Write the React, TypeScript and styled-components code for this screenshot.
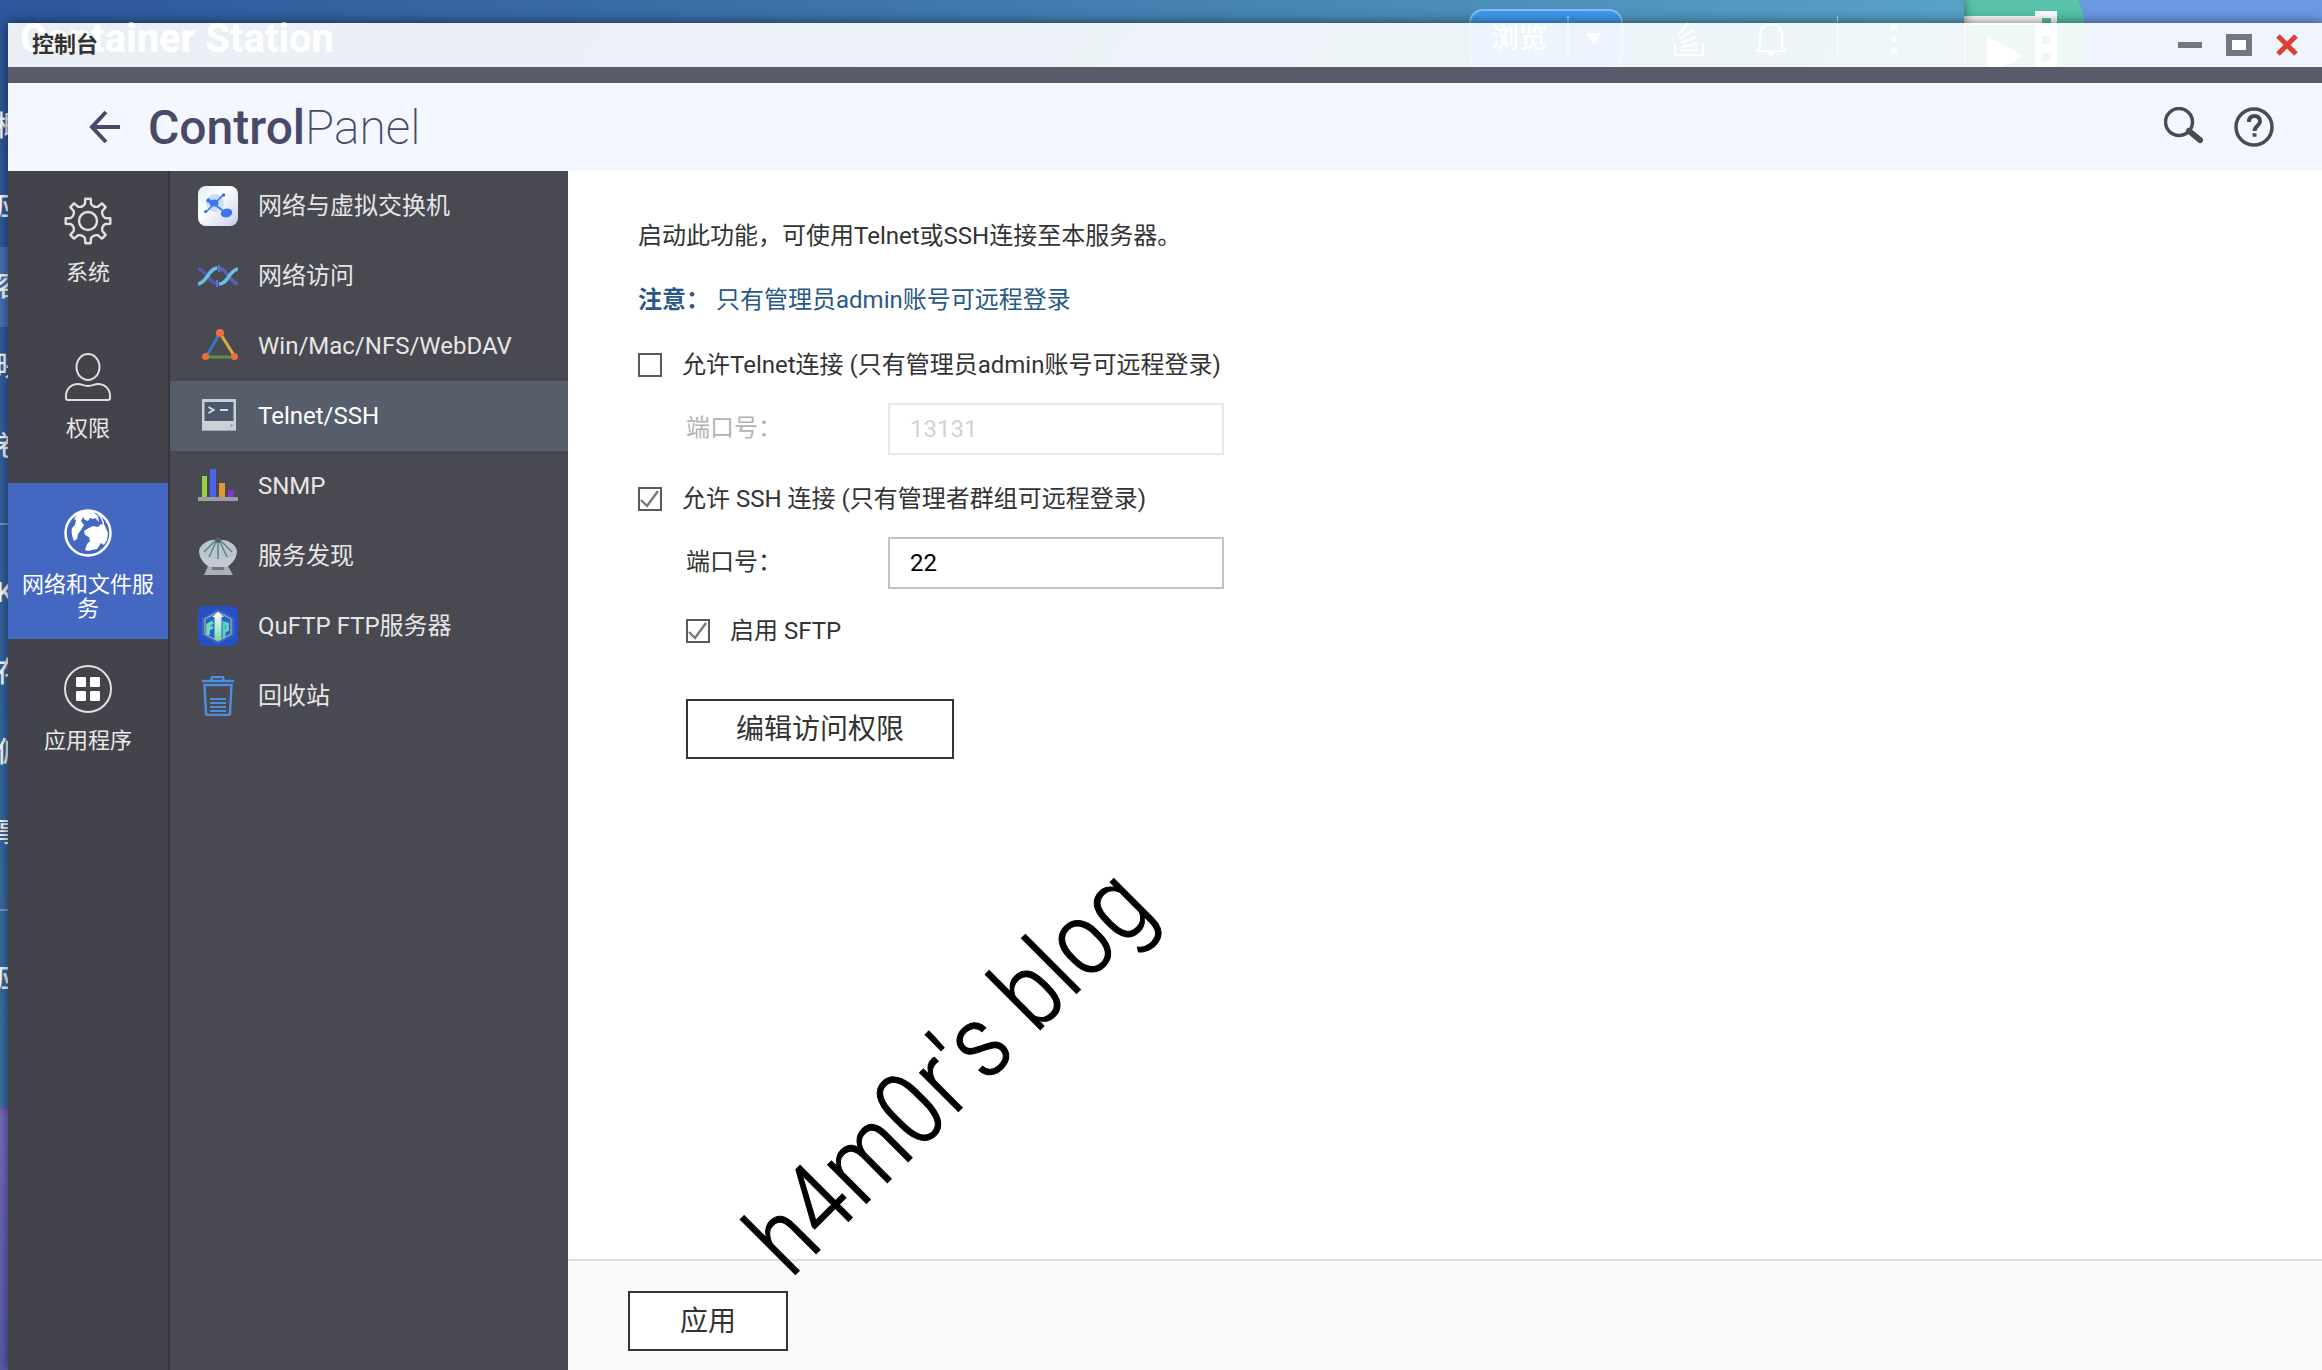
import React, { useState } from "react";
import styled, { createGlobalStyle } from "styled-components";

const GlobalStyle = createGlobalStyle`
  *, *::before, *::after { box-sizing: border-box; }
  body {
    margin: 0;
    font-family: Roboto, "Noto Sans CJK SC", sans-serif;
    font-size: 24px;
    color: #333;
  }
  button, input { font: inherit; color: inherit; }
`;

/* ---------- desktop and the window behind ---------- */

const Desktop = styled.div`
  position: relative;
  display: flex;
  flex-direction: column;
  min-height: 100vh;
  overflow: hidden;
  background:
    linear-gradient(180deg, transparent 1106px, #7a6fc4 1106px, #5a5fae 1370px) 0 0 / 600px 100% no-repeat,
    #6b99e4;
`;

const DesktopIcon = styled.svg`
  position: absolute;
  left: 1900px;
  top: 0;
`;

const BackWindow = styled.div`
  position: absolute;
  left: 0;
  top: 0;
  width: 1964px;
  height: 1106px;
  overflow: hidden;
  color: #fff;
  background: linear-gradient(125deg, #2d579c 0%, #3b71a8 28%, #4f93bd 58%, #5aa5c9 75%);
  box-shadow: 0 0 10px rgba(0, 0, 0, 0.5);
`;

const BackHeader = styled.div`
  display: flex;
  align-items: center;
  justify-content: space-between;
  height: 78px;
  padding: 0 64px 0 20px;
`;

const BackTitle = styled.span`
  font-size: 40px;
  font-weight: 700;
  line-height: 48px;
`;

const BackTools = styled.div`
  display: flex;
  align-items: center;
  gap: 50px;
`;

const BrowseButton = styled.button`
  display: flex;
  align-items: center;
  width: 154px;
  height: 60px;
  padding: 0;
  color: #fff;
  font-size: 28px;
  font-weight: 500;
  line-height: 32px;
  background: #409aee;
  border: 2px solid #7cc0fb;
  border-radius: 14px;
  span { flex: 1; text-align: center; }
  svg { width: 54px; height: 46px; border-left: 2px solid #7cc0fb; }
`;

const ToolDivider = styled.span`
  width: 1px;
  height: 46px;
  background: #b8dbea;
`;

const BackNav = styled.div`
  display: flex;
  flex-direction: column;
  padding-top: 9px;
`;

const BackItem = styled.div<{ $active?: boolean }>`
  display: flex;
  align-items: center;
  height: 80px;
  font-size: 28px;
  font-weight: 500;
  line-height: 32px;
  background: ${(p) => (p.$active ? "rgba(110, 150, 220, 0.4)" : "transparent")};
  span { margin-left: -4px; }
`;

const BackRule = styled.div`
  height: 2px;
  margin: 36px 0 28px;
  background: rgba(255, 255, 255, 0.35);
`;

/* ---------- control panel window ---------- */

const Window = styled.div`
  position: relative;
  display: flex;
  flex-direction: column;
  flex: 1;
  margin: 23px 0 0 8px;
  box-shadow: 0 0 12px rgba(0, 0, 0, 0.6);
`;

const TitleBar = styled.div`
  display: flex;
  align-items: center;
  justify-content: space-between;
  height: 44px;
  padding: 0 24px;
  background: rgba(255, 255, 255, 0.9);
`;

const WindowTitle = styled.span`
  font-size: 22px;
  font-weight: 700;
  line-height: 24px;
`;

const WindowButtons = styled.div`
  display: flex;
  align-items: center;
  gap: 24px;
`;

const IconButton = styled.button`
  display: flex;
  padding: 0;
  background: none;
  border: 0;
  cursor: pointer;
`;

const Band = styled.div`
  height: 16px;
  background: #5b5b6e;
`;

const Header = styled.header`
  display: flex;
  align-items: center;
  justify-content: space-between;
  height: 88px;
  padding: 0 48px 0 80px;
  background: #f4f7ff;
`;

const Brand = styled.div`
  display: flex;
  align-items: center;
  gap: 28px;
`;

const BrandName = styled.h1`
  margin: 0;
  padding-top: 2px;
  font-size: 48px;
  font-weight: 200;
  line-height: 56px;
  color: #484a68;
  b { font-weight: 500; }
`;

const HeaderTools = styled.div`
  display: flex;
  align-items: center;
  gap: 30px;
`;

const Body = styled.div`
  display: grid;
  grid-template-columns: 160px 400px 1fr;
  flex: 1;
  background: #fff;
`;

const Categories = styled.nav`
  background: #43434b;
`;

const Category = styled.button<{ $active?: boolean }>`
  display: flex;
  flex-direction: column;
  align-items: center;
  gap: 16px;
  width: 100%;
  height: 156px;
  padding: 26px 12px 0;
  font-size: 22px;
  line-height: 24px;
  color: ${(p) => (p.$active ? "#fff" : "#e8e8e8")};
  background: ${(p) => (p.$active ? "#4468c2" : "transparent")};
  border: 0;
  cursor: pointer;
`;

const Pages = styled.nav`
  line-height: 32px;
  background: #494951;
  border-left: 2px solid #37373b;
`;

const Page = styled.a<{ $active?: boolean }>`
  display: flex;
  align-items: center;
  gap: 20px;
  height: 70px;
  padding-left: 28px;
  color: ${(p) => (p.$active ? "#fff" : "#e6e6e6")};
  text-decoration: none;
  background: ${(p) => (p.$active ? "#575e6b" : "transparent")};
`;

const Main = styled.main`
  position: relative;
  display: flex;
  flex-direction: column;
`;

const Content = styled.div`
  display: flex;
  flex-direction: column;
  align-items: flex-start;
  flex: 1;
  padding: 49px 70px;
  line-height: 32px;
`;

const Intro = styled.p`
  margin: 0 0 32px;
`;

const Note = styled.p`
  display: flex;
  gap: 6px;
  margin: 0;
  color: #2a5885;
`;

const Group = styled.div`
  display: flex;
  flex-direction: column;
  gap: 22px;
  margin-top: 33px;
  & + & { margin-top: 28px; }
`;

const CheckRow = styled.label`
  display: flex;
  align-items: center;
  gap: 20px;
`;

const checkMark =
  "url(\"data:image/svg+xml,%3Csvg xmlns='http://www.w3.org/2000/svg' viewBox='0 0 20 20'%3E%3Cpath d='M1 11l6 6L18 2' fill='none' stroke='%23777' stroke-width='2.4'/%3E%3C/svg%3E\")";

const CheckBox = styled.input`
  appearance: none;
  width: 24px;
  height: 24px;
  margin: 0;
  border: 2px solid #5a5a5a;
  background: #fff;
  &:checked { background-image: ${checkMark}; }
`;

const PortRow = styled.div<{ $disabled?: boolean }>`
  display: flex;
  align-items: center;
  padding-left: 48px;
  color: ${(p) => (p.$disabled ? "#b3b3b3" : "#333")};
  label { width: 202px; padding-bottom: 2px; }
`;

const PortInput = styled.input`
  width: 336px;
  height: 52px;
  padding: 0 20px;
  color: #000;
  background: #fff;
  border: 2px solid #c2c2c2;
  &:disabled { color: #d2d2d2; border-color: #e8e8e8; }
`;

const Indented = styled.div`
  display: flex;
  flex-direction: column;
  align-items: flex-start;
  gap: 52px;
  margin-top: 26px;
  padding-left: 48px;
`;

const OutlineButton = styled.button<{ $width: number }>`
  width: ${(p) => p.$width}px;
  height: 60px;
  padding: 2px 0 0;
  font-size: 28px;
  line-height: 32px;
  background: #fff;
  border: 2px solid #333;
  cursor: pointer;
`;

const Footer = styled.footer`
  padding: 30px 60px 19px;
  background: #fafafa;
  border-top: 2px solid #dcdcdc;
`;

const Watermark = styled.div`
  position: absolute;
  left: 222px;
  top: 1024px;
  font-family: "Roboto Condensed", Roboto, sans-serif;
  font-size: 104px;
  font-weight: 300;
  line-height: 100px;
  color: #000;
  -webkit-text-stroke: 1px #000;
  white-space: nowrap;
  transform: rotate(-45deg);
  transform-origin: 0 85px;
  pointer-events: none;
`;

/* ---------- drawings ---------- */

const gearPath = (() => {
  const pts: string[] = [];
  for (let i = 0; i < 8; i++) {
    const at = (deg: number, r: number) => {
      const a = ((i * 45 + deg - 90) * Math.PI) / 180;
      return `${(24 + r * Math.cos(a)).toFixed(1)} ${(24 + r * Math.sin(a)).toFixed(1)}`;
    };
    pts.push(`${i ? "L" : "M"}${at(-7, 22.5)}L${at(7, 22.5)}L${at(10, 17.5)}Q${at(22.5, 14.5)} ${at(35, 17.5)}`);
  }
  return pts.join("") + "Z";
})();

const GearIcon = () => (
  <svg width="48" height="48" viewBox="0 0 48 48" fill="none" stroke="#e0e0e0" strokeWidth="2.4" strokeLinejoin="round">
    <path d={gearPath} />
    <circle cx="24" cy="24" r="9" />
  </svg>
);

const UserIcon = () => (
  <svg width="48" height="48" viewBox="0 0 48 48" fill="none" stroke="#e0e0e0" strokeWidth="2">
    <ellipse cx="24" cy="14" rx="11.5" ry="13" />
    <path d="M14 31c4 0 5 2 10 2s6-2 10-2c7 0 12 5 12 12v2q0 2-2 2H4q-2 0-2-2v-2c0-7 5-12 12-12z" />
  </svg>
);

const GlobeIcon = () => (
  <svg width="48" height="48" viewBox="0 0 48 48">
    <circle cx="24" cy="24" r="22.5" fill="none" stroke="#fff" strokeWidth="2.5" />
    <path fill="#fff" d="M13 5l8-3 8 1 5 4 1 6-4-4-2 1-3-1-2 3-3-1-2-3-2 4 3 4-3 5-3 4-1 5-3 2c-2-4-3-9-2-13l3-3 1-5-2-1z" />
    <path fill="#fff" d="M23 20l6-3 5 1 3-3 4 2 3 7-1 7-3 5-3-2-4 6-5 1-4 1-3-1 2-6 3-3-1-4-4-2-1-4z" />
    <path d="M32 3q7 5 8 15" fill="none" stroke="#fff" strokeWidth="1.5" />
  </svg>
);

const AppsIcon = () => (
  <svg width="48" height="48" viewBox="0 0 48 48">
    <circle cx="24" cy="24" r="23" fill="none" stroke="#e0e0e0" strokeWidth="2" />
    <g fill="#fff">
      <rect x="12" y="12" width="10" height="10" rx="1" />
      <rect x="26" y="12" width="10" height="10" rx="1" />
      <rect x="12" y="26" width="10" height="10" rx="1" />
      <rect x="26" y="26" width="10" height="10" rx="1" />
    </g>
  </svg>
);

const SwitchIcon = () => (
  <svg width="40" height="40" viewBox="0 0 40 40">
    <defs>
      <linearGradient id="sw" x1="0" y1="0" x2="1" y2="1">
        <stop offset="0" stopColor="#dff0f2" />
        <stop offset="0.4" stopColor="#fff" />
        <stop offset="1" stopColor="#c8cfe6" />
      </linearGradient>
    </defs>
    <rect width="40" height="40" rx="8" fill="url(#sw)" />
    <circle cx="17" cy="17" r="9" fill="#c9defb" />
    <path d="M8 26L25 9M10 14l6 4 12 9" fill="none" stroke="#3a74f2" strokeWidth="1.6" />
    <g fill="#3a74f2">
      <ellipse cx="16" cy="17" rx="4.5" ry="3.5" />
      <ellipse cx="28.5" cy="27" rx="5.8" ry="4.4" transform="rotate(-15 28.5 27)" />
      <circle cx="25.5" cy="9" r="1.8" />
      <circle cx="10.5" cy="14.5" r="2.2" />
      <circle cx="7.6" cy="25.6" r="1.6" />
    </g>
  </svg>
);

const AccessIcon = () => (
  <svg width="40" height="40" viewBox="0 0 40 40" fill="none" strokeWidth="3.5">
    <path d="M0 13c9 1 11 15 20 15 6 0 8-2 11-7" stroke="#4f57b5" />
    <path d="M9 20c3-5 6-8 11-8 9 0 11 14 20 16" stroke="#5560bb" />
    <path d="M0 28c10-2 10-15 19-16" stroke="#6cc0dc" />
    <path d="M21 28c9 0 10-14 19-15" stroke="#6cc0dc" />
    <path d="M21 9v7M19 24v7" stroke="#4f78cf" strokeWidth="2" />
  </svg>
);

const TriangleIcon = () => (
  <svg width="40" height="40" viewBox="0 0 40 40" strokeWidth="3">
    <path d="M22 7L8 31" stroke="#3577c9" />
    <path d="M22 7l15 24" stroke="#e0a93a" />
    <path d="M8 31h29" stroke="#56943f" />
    <g fill="#ee6b43">
      <circle cx="22" cy="7" r="4" />
      <circle cx="7.5" cy="30.5" r="3.5" />
      <circle cx="36.5" cy="30.5" r="3.5" />
    </g>
  </svg>
);

const TerminalIcon = () => (
  <svg width="40" height="40" viewBox="0 0 40 40">
    <rect x="4" y="3" width="34" height="32" rx="1" fill="#c9d1d8" />
    <rect x="6.5" y="6" width="29" height="19" fill="#4d586c" />
    <path d="M10.5 11l5 3-5 3" fill="none" stroke="#d5dbe0" strokeWidth="2" />
    <path d="M22 14h8" stroke="#d5dbe0" strokeWidth="2" />
    <path d="M4 34.5h34" stroke="#9fa9b2" />
    <circle cx="33.5" cy="29.5" r="1.5" fill="#8fb0b8" />
  </svg>
);

const ChartIcon = () => (
  <svg width="40" height="40" viewBox="0 0 40 40">
    <rect x="4" y="10" width="5" height="21" fill="#93d244" />
    <rect x="12" y="3" width="6" height="28" fill="#4c63ee" />
    <rect x="21" y="17" width="6" height="14" fill="#dd9a35" />
    <rect x="30" y="24" width="6" height="7" fill="#7a38cf" />
    <rect y="31" width="40" height="4" fill="#9d9fa6" />
  </svg>
);

const ShellIcon = () => (
  <svg width="40" height="40" viewBox="0 0 40 40">
    <path d="M10 30h20l5 9H6z" fill="#a9afb6" />
    <path d="M20 4c9-1 18 4 19 11 0 8-7 16-13 16H14C8 31 1 23 1 15 2 8 11 3 20 4z" fill="#b9c6cd" />
    <path d="M2 19c3 7 7 12 12 12h12c5 0 9-5 12-12-10 6-26 6-36 0z" fill="#c6c9cf" />
    <path d="M20 5v18M18 6l-7 15M22 6l7 15M17 5L6 16M23 5l11 11" stroke="#65808a" strokeWidth="1.5" />
    <path d="M14 32.5h12" stroke="#6b7780" strokeWidth="3" />
    <circle cx="20" cy="4" r="3" fill="#4f6269" />
  </svg>
);

const FtpIcon = () => (
  <svg width="40" height="40" viewBox="0 0 40 40">
    <defs>
      <linearGradient id="ftp" x1="0" y1="0" x2="0" y2="1">
        <stop offset="0" stopColor="#fff" />
        <stop offset="1" stopColor="#6fdc9e" />
      </linearGradient>
    </defs>
    <rect width="40" height="40" rx="7" fill="#2850c4" />
    <path d="M20 3l16 9v17l-16 9-16-9V12z" fill="#3d66cf" />
    <path d="M20 6l13 7v15l-13 7-13-7V13z" fill="#1d63dc" stroke="#c5bd62" />
    <path d="M20 6l6 5h-2.5v22L20 35l-3.5-2V11H14z" fill="url(#ftp)" />
    <path d="M15 16l-5 3v10M10 23l5-2" fill="none" stroke="#6ee0b0" strokeWidth="3.5" />
    <path d="M26 32V17l3.5 1v6l-3 1" fill="none" stroke="#5fd0c0" strokeWidth="3" />
  </svg>
);

const TrashIcon = () => (
  <svg width="40" height="40" viewBox="0 0 40 40" fill="none" stroke="#4a90dc" strokeWidth="2.4">
    <path d="M4 5h32M13 5l1-4h11l1 4" />
    <path d="M6.5 9h27l-1.5 28q0 2-2 2H10q-2 0-2-2z" />
    <path d="M12 23h16M12 27h16M12 31h16M12 35h16" strokeWidth="2" />
  </svg>
);

const StackIcon = () => (
  <svg width="32" height="36" viewBox="0 0 32 36" fill="none" stroke="#fff" strokeWidth="2">
    <path d="M2 22v12h28V22M8 29h16M8 23l16 3M9 16l15 6M12 9l13 9M17 2l9 11" transform="matrix(-1 0 0 1 32 0)" />
  </svg>
);

const BellIcon = () => (
  <svg width="32" height="36" viewBox="0 0 32 36" fill="none" stroke="#fff" strokeWidth="2">
    <path d="M5 25V15C5 7 10 3 16 3s11 4 11 12v10l3 5H2z" />
    <path d="M12 31l4 3 4-3z" fill="#fff" />
  </svg>
);

/* ---------- data ---------- */

const categories = [
  { name: "系统", Icon: GearIcon },
  { name: "权限", Icon: UserIcon },
  { name: "网络和文件服务", Icon: GlobeIcon },
  { name: "应用程序", Icon: AppsIcon },
];

const pages = [
  { name: "网络与虚拟交换机", Icon: SwitchIcon },
  { name: "网络访问", Icon: AccessIcon },
  { name: "Win/Mac/NFS/WebDAV", Icon: TriangleIcon },
  { name: "Telnet/SSH", Icon: TerminalIcon },
  { name: "SNMP", Icon: ChartIcon },
  { name: "服务发现", Icon: ShellIcon },
  { name: "QuFTP FTP服务器", Icon: FtpIcon },
  { name: "回收站", Icon: TrashIcon },
];

const backGroups = [["概", "应", "容", "映", "卷"], ["K", "存", "偏", "事"], ["应"]];

export default function App() {
  const [category, setCategory] = useState(2);
  const [page, setPage] = useState(3);
  const [telnet, setTelnet] = useState(false);
  const [ssh, setSsh] = useState(true);
  const [sftp, setSftp] = useState(true);

  return (
    <Desktop>
      <GlobalStyle />
      <DesktopIcon width="190" height="120" viewBox="0 0 190 120">
        <path d="M0 0h178q7 12 7 34v86H0z" fill="#58c3a8" />
        <path d="M60 16h75v-5h22v109h-22V25H66v95h-6z" fill="#fff" />
        <path d="M87 36l36 20-36 20z" fill="#fff" />
        <path d="M142 18h9v7h-9zM142 36h9v8h-9zM142 53h9v8h-9z" fill="#58c3a8" />
      </DesktopIcon>
      <BackWindow>
        <BackHeader>
          <BackTitle>Container Station</BackTitle>
          <BackTools>
            <BrowseButton>
              <span>浏览</span>
              <svg viewBox="0 0 54 46">
                <path d="M18 17h16l-8 12z" fill="#fff" />
              </svg>
            </BrowseButton>
            <StackIcon />
            <BellIcon />
            <ToolDivider />
            <svg width="12" height="36" viewBox="0 0 12 36" fill="#fff">
              <circle cx="6" cy="6" r="3" />
              <circle cx="6" cy="18" r="3" />
              <circle cx="6" cy="30" r="3" />
            </svg>
          </BackTools>
        </BackHeader>
        <BackNav>
          {backGroups.map((group, g) => (
            <React.Fragment key={g}>
              {g > 0 && <BackRule />}
              {group.map((label, i) => (
                <BackItem key={label} $active={g === 0 && i === 2}>
                  <span>{label}</span>
                </BackItem>
              ))}
            </React.Fragment>
          ))}
        </BackNav>
      </BackWindow>

      <Window>
        <TitleBar>
          <WindowTitle>控制台</WindowTitle>
          <WindowButtons>
            <IconButton aria-label="最小化">
              <svg width="24" height="22" viewBox="0 0 24 22">
                <path d="M0 8h24v6H0z" fill="#727780" />
              </svg>
            </IconButton>
            <IconButton aria-label="最大化">
              <svg width="26" height="22" viewBox="0 0 26 22">
                <path d="M3 3h20v16H3z" fill="#fff" stroke="#727780" strokeWidth="6" />
              </svg>
            </IconButton>
            <IconButton aria-label="关闭">
              <svg width="22" height="22" viewBox="0 0 22 22">
                <path d="M2 2l18 18M20 2L2 20" stroke="#dc4034" strokeWidth="5" />
              </svg>
            </IconButton>
          </WindowButtons>
        </TitleBar>
        <Band />
        <Header>
          <Brand>
            <IconButton aria-label="返回">
              <svg width="32" height="36" viewBox="0 0 32 36" fill="none" stroke="#484a68" strokeWidth="4">
                <path d="M18 3L4 18l14 15M3 18h29" />
              </svg>
            </IconButton>
            <BrandName>
              <b>Control</b>Panel
            </BrandName>
          </Brand>
          <HeaderTools>
            <IconButton aria-label="搜索">
              <svg width="40" height="40" viewBox="0 0 40 40" fill="none" stroke="#4a4b56">
                <circle cx="15" cy="15" r="13.5" strokeWidth="3.5" />
                <path d="M25 24l11 9" strokeWidth="6" strokeLinecap="round" />
              </svg>
            </IconButton>
            <IconButton aria-label="帮助">
              <svg width="40" height="40" viewBox="0 0 40 40" fill="none" stroke="#4a4b56" strokeWidth="3.5">
                <circle cx="20" cy="20" r="18" />
                <path d="M15 15c0-4 2-6 5.500-6s5.500 2 5.500 5.500c0 4-5.500 4.500-5.500 9.500" strokeWidth="4" />
                <path d="M18.500 28h4" />
              </svg>
            </IconButton>
          </HeaderTools>
        </Header>

        <Body>
          <Categories>
            {categories.map(({ name, Icon }, i) => (
              <Category key={name} $active={i === category} onClick={() => setCategory(i)}>
                <Icon />
                <span>{name}</span>
              </Category>
            ))}
          </Categories>
          <Pages>
            {pages.map(({ name, Icon }, i) => (
              <Page key={name} href="#" $active={i === page} onClick={() => setPage(i)}>
                <Icon />
                <span>{name}</span>
              </Page>
            ))}
          </Pages>
          <Main>
            <Content>
              <Intro>启动此功能，可使用Telnet或SSH连接至本服务器。</Intro>
              <Note>
                <b>注意：</b>
                <span>只有管理员admin账号可远程登录</span>
              </Note>
              <Group>
                <CheckRow>
                  <CheckBox type="checkbox" checked={telnet} onChange={(e) => setTelnet(e.target.checked)} />
                  <span>允许Telnet连接 (只有管理员admin账号可远程登录)</span>
                </CheckRow>
                <PortRow $disabled={!telnet}>
                  <label htmlFor="telnet-port">端口号：</label>
                  <PortInput id="telnet-port" defaultValue="13131" disabled={!telnet} />
                </PortRow>
              </Group>
              <Group>
                <CheckRow>
                  <CheckBox type="checkbox" checked={ssh} onChange={(e) => setSsh(e.target.checked)} />
                  <span>允许 SSH 连接 (只有管理者群组可远程登录)</span>
                </CheckRow>
                <PortRow $disabled={!ssh}>
                  <label htmlFor="ssh-port">端口号：</label>
                  <PortInput id="ssh-port" defaultValue="22" disabled={!ssh} />
                </PortRow>
              </Group>
              <Indented>
                <CheckRow>
                  <CheckBox type="checkbox" checked={sftp} onChange={(e) => setSftp(e.target.checked)} />
                  <span>启用 SFTP</span>
                </CheckRow>
                <OutlineButton $width={268}>编辑访问权限</OutlineButton>
              </Indented>
            </Content>
            <Footer>
              <OutlineButton $width={160}>应用</OutlineButton>
            </Footer>
            <Watermark>h4m0r's blog</Watermark>
          </Main>
        </Body>
      </Window>
    </Desktop>
  );
}
